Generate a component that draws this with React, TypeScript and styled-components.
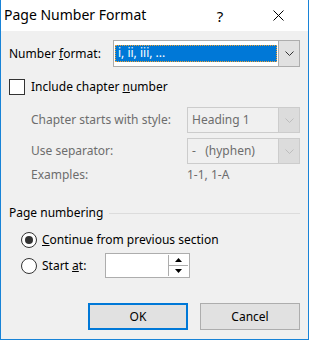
import React from 'react';
import styled, { createGlobalStyle } from 'styled-components';

const Global = createGlobalStyle`
  html, body { margin: 0; padding: 0; background: #ffffff; }
  #root { width: 309px; height: 340px; }
`;

const FONT = `"Noto Sans", "Open Sans", "DejaVu Sans", sans-serif`;

const Window = styled.div`
  width: 309px;
  height: 340px;
  box-sizing: border-box;
  border: 1px solid #1883d7;
  border-top: none;
  display: flex;
  flex-direction: column;
  font-family: ${FONT};
  font-size: 12px;
  color: #000;
  background: #f0f0f0;
`;

const TitleBar = styled.div`
  height: 31px;
  background: #ffffff;
  display: flex;
  align-items: center;
  flex-shrink: 0;
`;

const Title = styled.div`
  flex: 1;
  padding-left: 3px;
  font-size: 14px;
  line-height: 20px;
  margin-top: -1px;
`;

const CaptionButton = styled.div<{ $w: number }>`
  width: ${p => p.$w}px;
  height: 31px;
  display: flex;
  align-items: center;
  justify-content: center;
  font-size: 15px;
  color: #000;
`;

const Body = styled.div`
  flex: 1;
  display: flex;
  flex-direction: column;
  padding: 9px 8px 9px 8px;
`;

const FormatRow = styled.div`
  display: flex;
  align-items: center;
  height: 27px;
`;

const Label = styled.div<{ $w?: number; $disabled?: boolean }>`
  ${p => (p.$w ? `width: ${p.$w}px;` : '')}
  color: ${p => (p.$disabled ? '#6d6d6d' : '#000')};
  line-height: 16px;
  white-space: nowrap;
`;

const Combo = styled.div<{ $disabled?: boolean; $h: number; $w: number }>`
  box-sizing: border-box;
  width: ${p => p.$w}px;
  height: ${p => p.$h}px;
  border: 1px solid ${p => (p.$disabled ? '#cccccc' : '#adadad')};
  background: ${p => (p.$disabled ? '#f0f0f0' : '#ffffff')};
  display: flex;
  align-items: stretch;
`;

const ComboField = styled.div`
  flex: 1;
  display: flex;
  align-items: center;
  padding-left: 1px;
  min-width: 0;
`;

const Selection = styled.div`
  box-sizing: border-box;
  width: 100%;
  height: 17px;
  margin-right: 1px;
  background: #0078d7;
  color: #ffffff;
  border: 1px dotted #f0a030;
  line-height: 14px;
  padding-left: 2px;
  white-space: nowrap;
`;

const ComboText = styled.div<{ $disabled?: boolean }>`
  padding-left: 3px;
  line-height: 16px;
  color: ${p => (p.$disabled ? '#6d6d6d' : '#000')};
  white-space: pre;
`;

const DropButton = styled.div<{ $disabled?: boolean }>`
  width: 20px;
  border-left: 1px solid ${p => (p.$disabled ? '#cccccc' : '#adadad')};
  background: ${p => (p.$disabled ? '#dcdcdc' : '#e1e1e1')};
  display: flex;
  align-items: center;
  justify-content: center;
`;

const CheckRow = styled.div`
  display: flex;
  align-items: center;
  gap: 6px;
  height: 16px;
  margin-top: 12px;
`;

const CheckBox = styled.div`
  box-sizing: border-box;
  width: 16px;
  height: 16px;
  border: 1px solid #333333;
  background: #ffffff;
`;

const SubGrid = styled.div`
  display: grid;
  grid-template-columns: 156px 113px;
  grid-auto-rows: 26px;
  row-gap: 5px;
  align-items: center;
  margin-top: 12px;
  padding-left: 22px;
`;

const ExamplesRow = styled.div`
  display: grid;
  grid-template-columns: 156px 113px;
  height: 16px;
  margin-top: 3px;
  padding-left: 22px;
  align-items: center;
`;

const GroupHeader = styled.div`
  display: flex;
  align-items: center;
  margin-top: 22px;
  height: 16px;
`;

const GroupLine = styled.div`
  flex: 1;
  height: 1px;
  background: #dcdcdc;
  margin-left: 6px;
  margin-top: 1px;
`;

const RadioRow = styled.div<{ $h: number; $mt: number }>`
  display: flex;
  align-items: center;
  height: ${p => p.$h}px;
  margin-top: ${p => p.$mt}px;
  padding-left: 12px;
`;

const Radio = styled.div<{ $checked?: boolean }>`
  box-sizing: border-box;
  width: 16px;
  height: 16px;
  border-radius: 50%;
  border: 1px solid #333333;
  background: #ffffff;
  margin-right: 5px;
  display: flex;
  align-items: center;
  justify-content: center;
  &::after {
    content: '';
    display: ${p => (p.$checked ? 'block' : 'none')};
    width: 8px;
    height: 8px;
    border-radius: 50%;
    background: #333333;
  }
`;

const SpinBox = styled.div`
  box-sizing: border-box;
  width: 85px;
  height: 25px;
  border: 1px solid #adadad;
  background: #ffffff;
  display: flex;
  justify-content: flex-end;
`;

const SpinButtons = styled.div`
  width: 19px;
  margin: 1px 1px 1px 0;
  border-left: 1px solid #adadad;
  display: flex;
  flex-direction: column;
`;

const SpinHalf = styled.div<{ $top?: boolean }>`
  flex: 1;
  display: flex;
  align-items: center;
  justify-content: center;
  ${p => (p.$top ? 'border-bottom: 1px solid #adadad;' : '')}
`;

const ButtonRow = styled.div`
  margin-top: auto;
  display: flex;
  justify-content: flex-end;
  gap: 12px;
`;

const Button = styled.div<{ $default?: boolean }>`
  box-sizing: border-box;
  width: 100px;
  height: 27px;
  background: #e1e1e1;
  border: ${p => (p.$default ? '2px solid #0078d7' : '1px solid #adadad')};
  display: flex;
  align-items: center;
  justify-content: center;
  line-height: 16px;
`;

const Chevron = ({ color }: { color: string }) => (
  <svg width="9" height="5" viewBox="0 0 9 5">
    <path d="M0.5 0.5 L4.5 4.5 L8.5 0.5" fill="none" stroke={color} strokeWidth="1" />
  </svg>
);

const Tri = ({ up }: { up?: boolean }) => (
  <svg width="7" height="4" viewBox="0 0 7 4">
    <path d={up ? 'M0 4 L3.5 0 L7 4 Z' : 'M0 0 L3.5 4 L7 0 Z'} fill="#000" />
  </svg>
);

export default function App() {
  return (
    <>
      <Global />
      <Window>
        <TitleBar>
          <Title>Page Number Format</Title>
          <CaptionButton $w={46}>?</CaptionButton>
          <CaptionButton $w={46} style={{ marginLeft: 12, marginRight: 7 }}>
            <svg width="11" height="11" viewBox="0 0 11 11">
              <path d="M0.5 0.5 L10.5 10.5 M10.5 0.5 L0.5 10.5" stroke="#000" strokeWidth="1" />
            </svg>
          </CaptionButton>
        </TitleBar>
        <Body>
          <FormatRow>
            <Label $w={104}>
              Number <u>f</u>ormat:
            </Label>
            <Combo $w={187} $h={27}>
              <ComboField>
                <Selection>i, ii, iii, ...</Selection>
              </ComboField>
              <DropButton>
                <Chevron color="#333333" />
              </DropButton>
            </Combo>
          </FormatRow>

          <CheckRow>
            <CheckBox />
            <Label>
              Include chapter <u>n</u>umber
            </Label>
          </CheckRow>

          <SubGrid>
            <Label $disabled>Chapter starts with style:</Label>
            <Combo $w={113} $h={26} $disabled>
              <ComboField>
                <ComboText $disabled>Heading 1</ComboText>
              </ComboField>
              <DropButton $disabled>
                <Chevron color="#bdbdbd" />
              </DropButton>
            </Combo>
            <Label $disabled>Use separator:</Label>
            <Combo $w={113} $h={26} $disabled>
              <ComboField>
                <ComboText $disabled>{'-   (hyphen)'}</ComboText>
              </ComboField>
              <DropButton $disabled>
                <Chevron color="#bdbdbd" />
              </DropButton>
            </Combo>
          </SubGrid>
          <ExamplesRow>
            <Label $disabled>Examples:</Label>
            <Label $disabled>1-1, 1-A</Label>
          </ExamplesRow>

          <GroupHeader>
            <Label>Page numbering</Label>
            <GroupLine />
          </GroupHeader>

          <RadioRow $h={16} $mt={11}>
            <Radio $checked />
            <Label>
              <u>C</u>ontinue from previous section
            </Label>
          </RadioRow>
          <RadioRow $h={25} $mt={5}>
            <Radio />
            <Label $w={63}>
              Start <u>a</u>t:
            </Label>
            <SpinBox>
              <SpinButtons>
                <SpinHalf $top>
                  <Tri up />
                </SpinHalf>
                <SpinHalf>
                  <Tri />
                </SpinHalf>
              </SpinButtons>
            </SpinBox>
          </RadioRow>

          <ButtonRow>
            <Button $default>OK</Button>
            <Button>Cancel</Button>
          </ButtonRow>
        </Body>
      </Window>
    </>
  );
}
